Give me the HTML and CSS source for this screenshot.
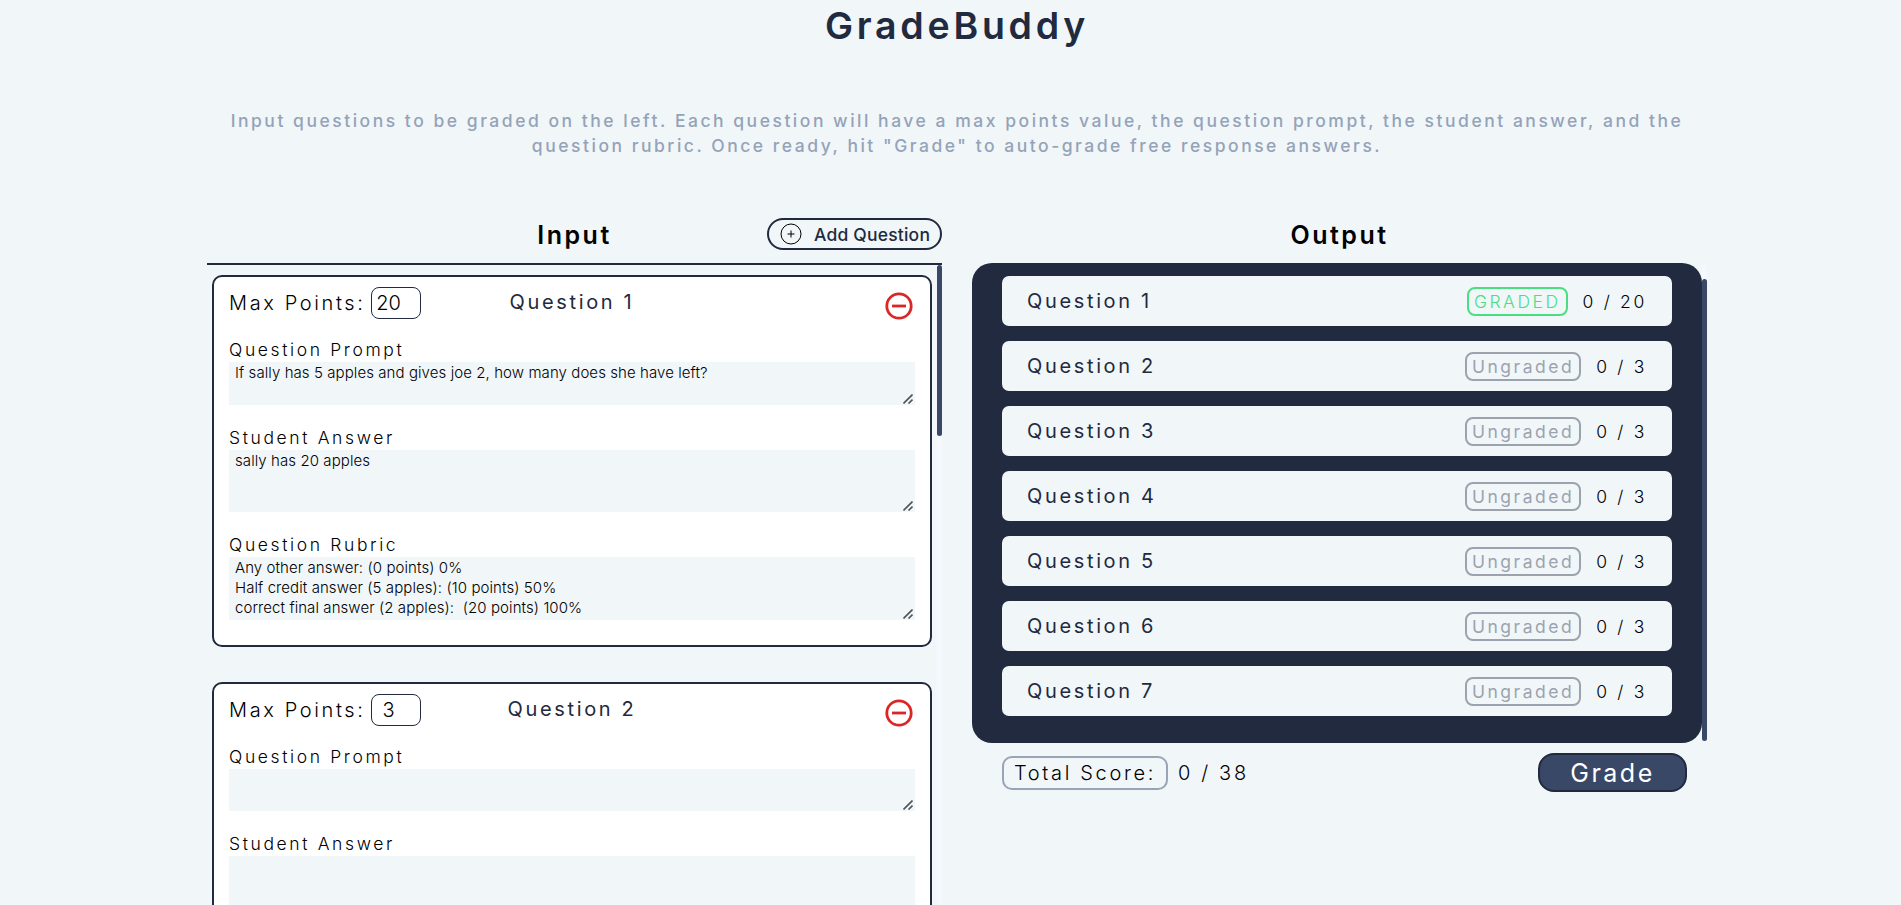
FILE: index.html
```html
<!DOCTYPE html>
<html lang="en">
<head>
<meta charset="utf-8">
<title>GradeBuddy</title>
<link rel="stylesheet" href="styles.css">
</head>
<body>
<svg class="defs"><symbol id="grip" viewBox="0 0 10 10"><path d="M.5 9.500l9-9M5.500 9.500l4-4" fill="none" stroke="#50545a" stroke-width="1.600"/></symbol></svg>
<main class="page">
  <h1 class="title">GradeBuddy</h1>
  <p class="intro">Input questions to be graded on the left. Each question will have a max points value, the question prompt, the student answer, and the question rubric. Once ready, hit "Grade" to auto-grade free response answers.</p>
  <div class="columns">
    <section class="input-col">
      <header class="col-head">
        <h2 class="col-title">Input</h2>
        <button class="add-btn"><svg class="add-icon" viewBox="0 0 22 22" fill="none" stroke="#000"><circle cx="11" cy="11" r="10"/><path d="M11 7.500v7M7.500 11h7"/></svg>Add Question</button>
      </header>
      <div class="scroller">
        <div class="cards">
          <article class="card">
            <div class="card-head">
              <label class="points">Max Points:<input class="points-input" type="text" value="20"></label>
              <h3 class="card-title">Question 1</h3>
              <svg class="remove" viewBox="0 0 28 28" fill="none" stroke="#dc2626" stroke-width="2.8"><circle cx="14" cy="14" r="12.2"/><path d="M7 14h14"/></svg>
            </div>
            <label class="field-label">Question Prompt</label>
            <div class="field-wrap prompt"><textarea class="field" spellcheck="false">If sally has 5 apples and gives joe 2, how many does she have left?</textarea><svg class="grip"><use href="#grip"/></svg></div>
            <label class="field-label">Student Answer</label>
            <div class="field-wrap answer"><textarea class="field" spellcheck="false">sally has 20 apples</textarea><svg class="grip"><use href="#grip"/></svg></div>
            <label class="field-label">Question Rubric</label>
            <div class="field-wrap rubric"><textarea class="field" spellcheck="false">Any other answer: (0 points) 0%
Half credit answer (5 apples): (10 points) 50%
correct final answer (2 apples):  (20 points) 100%</textarea><svg class="grip"><use href="#grip"/></svg></div>
          </article>
          <article class="card">
            <div class="card-head">
              <label class="points">Max Points:<input class="points-input" type="text" value="3"></label>
              <h3 class="card-title">Question 2</h3>
              <svg class="remove" viewBox="0 0 28 28" fill="none" stroke="#dc2626" stroke-width="2.8"><circle cx="14" cy="14" r="12.2"/><path d="M7 14h14"/></svg>
            </div>
            <label class="field-label">Question Prompt</label>
            <div class="field-wrap prompt short"><textarea class="field"></textarea><svg class="grip"><use href="#grip"/></svg></div>
            <label class="field-label">Student Answer</label>
            <div class="field-wrap answer"><textarea class="field"></textarea></div>
          </article>
        </div>
        <div class="track"><div class="thumb input-thumb"></div></div>
      </div>
    </section>
    <section class="output-col">
      <header class="col-head"><h2 class="col-title">Output</h2></header>
      <div class="results-wrap">
        <div class="results">
          <div class="row"><span class="name">Question 1</span><span class="badge graded">GRADED</span><span class="score">0 / 20</span></div>
          <div class="row"><span class="name">Question 2</span><span class="badge">Ungraded</span><span class="score">0 / 3</span></div>
          <div class="row"><span class="name">Question 3</span><span class="badge">Ungraded</span><span class="score">0 / 3</span></div>
          <div class="row"><span class="name">Question 4</span><span class="badge">Ungraded</span><span class="score">0 / 3</span></div>
          <div class="row"><span class="name">Question 5</span><span class="badge">Ungraded</span><span class="score">0 / 3</span></div>
          <div class="row"><span class="name">Question 6</span><span class="badge">Ungraded</span><span class="score">0 / 3</span></div>
          <div class="row"><span class="name">Question 7</span><span class="badge">Ungraded</span><span class="score">0 / 3</span></div>
        </div>
        <div class="track output-track"><div class="thumb output-thumb"></div></div>
      </div>
      <footer class="totals">
        <span class="total-label">Total Score:</span>
        <span class="total-score">0 / 38</span>
        <button class="grade-btn">Grade</button>
      </footer>
    </section>
  </div>
</main>
</body>
</html>
```
FILE: styles.css
```css
* { box-sizing: border-box; margin: 0; padding: 0; }
html, body { height: 100%; overflow: hidden; }
body { background: #f1f6f9; font-family: Inter, sans-serif; font-weight: 300; color: #000; }
button, input, textarea { font-family: inherit; color: inherit; outline: none; }
.defs { display: none; }

.page { width: 1500px; height: 905px; margin-left: 207px; display: flex; flex-direction: column; letter-spacing: 2.5px; }
.title { font-size: 37.5px; line-height: 51px; font-weight: 600; letter-spacing: 3.75px; color: #212a3e; text-align: center; }
.intro { margin: 57px 0 0; padding: 0 10px; font-size: 17.5px; line-height: 25px; font-weight: 500; letter-spacing: 2.52px; color: #94a3b8; text-align: center; }
.columns { flex: 1; min-height: 0; margin-top: 50px; display: flex; gap: 30px; }
.input-col, .output-col { width: 735px; display: flex; flex-direction: column; min-height: 0; }

.col-head { height: 55px; flex: none; display: grid; grid-template-columns: 1fr auto 1fr; padding-top: 10px; align-items: start; }
.col-title { grid-column: 2; font-size: 25px; line-height: 34px; font-weight: 600; letter-spacing: 2.5px; }
.add-btn { justify-self: end; width: 175px; height: 32px; border: 2px solid #212a3e; border-radius: 16px; background: none; display: flex; align-items: center; gap: 12px; padding-left: 11px; font-size: 17.5px; font-weight: 500; letter-spacing: 0.2px; color: #212a3e; white-space: nowrap; }
.add-icon { width: 22px; height: 22px; flex: none; }

.scroller { flex: 1; min-height: 0; overflow: hidden; border-top: 2px solid #212a3e; display: flex; }
.cards { flex: 1; padding: 10px 5px; display: flex; flex-direction: column; gap: 35px; }
.track { width: 5px; flex: none; background: #f5f9ff; }
.thumb { background: #394867; border-radius: 3px; }
.input-thumb { height: 171px; }

.card { flex: none; height: 372px; border: 2px solid #212a3e; border-radius: 10px; background: #fff; padding: 10px 15px; display: flex; flex-direction: column; }
.card-head { display: grid; grid-template-columns: 1fr auto 1fr; height: 52px; flex: none; align-items: start; }
.points { display: flex; align-items: center; font-size: 20px; line-height: 32px; letter-spacing: 2.62px; gap: 5px; }
.points-input { width: 50px; height: 32px; border: 1px solid #212a3e; border-radius: 8px; background: #fff; font-size: 20px; font-weight: 300; text-align: center; padding-right: 14px; }
.card-title { font-size: 20px; line-height: 30px; font-weight: 400; letter-spacing: 2.65px; color: #212a3e; }
.remove { width: 28px; height: 28px; justify-self: end; margin: 5px 2px 0 0; }
.field-label { height: 23px; flex: none; font-size: 17.5px; line-height: 22px; letter-spacing: 2.62px; }
.field-wrap { position: relative; flex: none; }
.field { width: 100%; height: 100%; display: block; border: 0; background: #f1f6f9; padding: 1px 6px; font-size: 15px; line-height: 20px; font-weight: 300; letter-spacing: 0.08px; resize: none; overflow: hidden; }
.grip { position: absolute; right: 2px; bottom: 1px; width: 10px; height: 10px; }
.prompt { height: 43px; margin-bottom: 22px; }
.prompt.short { height: 42px; }
.answer { height: 62px; margin-bottom: 22px; }
.rubric { height: 63px; }

.results-wrap { height: 480px; flex: none; display: flex; }
.results { width: 730px; background: #212a3e; border-radius: 20px; padding: 13px 30px 27px; display: flex; flex-direction: column; gap: 15px; }
.row { height: 50px; flex: none; background: #f1f6f9; border-radius: 7px; padding: 0 25px; display: flex; align-items: center; }
.name { flex: 1; font-size: 20px; font-weight: 400; letter-spacing: 2.65px; color: #212a3e; }
.badge { height: 29px; border: 2px solid #9ca3af; border-radius: 8px; padding: 0 5px; font-size: 17.5px; line-height: 25px; font-weight: 400; letter-spacing: 2.5px; color: #9ca3af; }
.graded { border-color: #4ade80; color: #4ade80; font-weight: 300; }
.score { margin-left: 15px; font-size: 17.5px; letter-spacing: 2.7px; }
.output-track { margin: 2px 0; padding-top: 14px; background: linear-gradient(#f5f9ff 20px, transparent 20px); }
.output-thumb { height: 462px; }

.totals { display: flex; align-items: center; height: 39px; margin: 10px 20px 0 30px; font-size: 20px; letter-spacing: 2.65px; }
.total-label { height: 34px; border: 2px solid #9ba4b5; border-radius: 10px; padding: 0 10px; line-height: 30px; }
.total-score { margin-left: 10px; flex: 1; }
.grade-btn { width: 149px; height: 39px; border: 2px solid #212a3e; border-radius: 16px; background: #394867; color: #fff; font-size: 25px; line-height: 34px; font-weight: 400; letter-spacing: 2.5px; }
```
